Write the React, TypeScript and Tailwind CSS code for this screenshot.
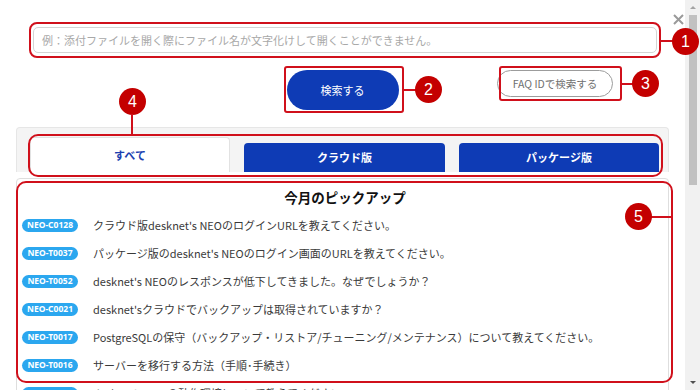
import React from 'react';

const faqs = [
  { id: 'NEO-C0128', title: "クラウド版desknet's NEOのログインURLを教えてください。" },
  { id: 'NEO-T0037', title: "パッケージ版のdesknet's NEOのログイン画面のURLを教えてください。" },
  { id: 'NEO-T0052', title: "desknet's NEOのレスポンスが低下してきました。なぜでしょうか？" },
  { id: 'NEO-C0021', title: "desknet'sクラウドでバックアップは取得されていますか？" },
  { id: 'NEO-T0017', title: 'PostgreSQLの保守（バックアップ・リストア/チューニング/メンテナンス）について教えてください。' },
  { id: 'NEO-T0016', title: 'サーバーを移行する方法（手順･手続き）' },
  { id: 'NEO-T0001', title: "desknet's NEOの動作環境について教えてください。" },
];

const Marker = ({ n, className }: { n: number; className: string }) => (
  <div
    className={`absolute w-[27px] h-[27px] rounded-full bg-[#c40000] text-white flex items-center justify-center text-[16px] font-['Liberation_Sans',sans-serif] ${className}`}
  >
    {n}
  </div>
);

function Annotations() {
  return (
    <div className="absolute inset-0 pointer-events-none">
      {/* 1: search box */}
      <div className="absolute left-[29px] top-[22px] w-[632px] h-[36px] rounded-[8px] border-2 border-[#d0101b]" />
      <div className="absolute left-[660px] top-[40px] w-[14px] h-[2px] bg-[#d0101b]" />
      <Marker n={1} className="left-[672px] top-[28px]" />

      {/* 2: search button */}
      <div className="absolute left-[284px] top-[66px] w-[120px] h-[47px] rounded-[3px] border-2 border-[#d0101b]" />
      <div className="absolute left-[403px] top-[89px] w-[14px] h-[2px] bg-[#d0101b]" />
      <Marker n={2} className="left-[415px] top-[76px]" />

      {/* 3: faq id button */}
      <div className="absolute left-[499px] top-[66px] w-[123px] h-[35px] rounded-[3px] border-2 border-[#d0101b]" />
      <div className="absolute left-[621px] top-[83px] w-[13px] h-[2px] bg-[#d0101b]" />
      <Marker n={3} className="left-[632px] top-[70px]" />

      {/* 4: tabs */}
      <Marker n={4} className="left-[119px] top-[88px]" />
      <div className="absolute left-[131px] top-[114px] w-[2px] h-[21px] bg-[#d0101b]" />
      <div className="absolute left-[28px] top-[134px] w-[635px] h-[43px] rounded-[10px] border-2 border-[#d0101b]" />

      {/* 5: pickup list */}
      <div className="absolute left-[16px] top-[181px] w-[657px] h-[202px] rounded-[10px] border-2 border-[#d0101b]" />
      <div className="absolute left-[650px] top-[216px] w-[22px] h-[2px] bg-[#d0101b]" />
      <Marker n={5} className="left-[625px] top-[203px]" />
    </div>
  );
}

function Scrollbar() {
  return (
    <div className="w-[15px] h-full bg-[#f1f1f1] flex flex-col items-center">
      <div className="h-[15px] flex items-center justify-center">
        <div className="w-0 h-0 border-l-[3px] border-r-[3px] border-b-[3px] border-l-transparent border-r-transparent border-b-[#a3a3a3]" />
      </div>
      <div className="w-[8px] h-[170px] bg-[#c1c1c1]" />
      <div className="flex-1" />
      <div className="h-[15px] flex items-center justify-center">
        <div className="w-0 h-0 border-l-[3px] border-r-[3px] border-t-[3px] border-l-transparent border-r-transparent border-t-[#505050]" />
      </div>
    </div>
  );
}

export default function App() {
  return (
    <div className="relative w-[700px] h-[390px] overflow-hidden bg-white flex font-['Noto_Sans_CJK_JP','Meiryo',sans-serif] text-[#333]">
      <div className="relative w-[685px] h-full overflow-hidden">
        {/* close */}
        <svg className="absolute left-[673px] top-[14px]" width="11" height="11" viewBox="0 0 11 11">
          <path d="M1 1L10 10M10 1L1 10" stroke="#9a9a9a" strokeWidth="2" />
        </svg>

        <div className="pt-[27px] pl-[33px] pr-[28px]">
          <div className="h-[26px] rounded-[5px] border border-[#d4d4d4] bg-white flex items-center pl-[8px] text-[11px] text-[#a8a8a8]">
            例：添付ファイルを開く際にファイル名が文字化けして開くことができません。
          </div>
        </div>

        <div className="mt-[17px] mx-[16px] grid grid-cols-[1fr_112px_1fr] items-start">
          <div />
          <button className="h-[40px] rounded-full bg-[#0e3bb5] text-white text-[11px]">検索する</button>
          <div className="flex justify-end pr-[56px]">
            <button className="w-[116px] h-[27px] rounded-full border border-[#9c9c9c] bg-white text-[10.5px] text-[#707070]">
              FAQ IDで検索する
            </button>
          </div>
        </div>

        <div className="mt-[17px] mx-[16px] h-[45px] bg-[#f4f4f4] border border-b-0 border-[#e6e6e6] rounded-t-[4px] flex items-end gap-[14px] pl-[13px]">
          <div className="shrink-0 w-[200px] h-[35px] bg-white border border-b-0 border-[#e2e2e2] rounded-t-[4px] flex items-center justify-center text-[11px] font-bold text-[#1b3fb0]">
            すべて
          </div>
          <div className="shrink-0 w-[201px] h-[29px] bg-[#0e3bb5] rounded-t-[4px] flex items-center justify-center text-[11px] font-bold text-white">
            クラウド版
          </div>
          <div className="shrink-0 w-[200px] h-[29px] bg-[#0e3bb5] rounded-t-[4px] flex items-center justify-center text-[11px] font-bold text-white">
            パッケージ版
          </div>
        </div>

        <div className="mt-[6px] mx-[16px] border border-[#dedede] rounded-[4px] bg-white pl-[5px]">
          <div className="pt-[8px] h-[32px] text-center text-[13.5px] font-bold text-[#111] leading-[20px]">
            今月のピックアップ
          </div>
          {faqs.map((f) => (
            <div key={f.id} className="h-[28px] flex items-center gap-[15px]">
              <span className="w-[56px] h-[13px] rounded-full bg-[#2ba7ef] text-white text-[8.5px] font-bold flex items-center justify-center font-['Noto_Sans',sans-serif] leading-none">
                {f.id}
              </span>
              <span className="text-[11px] text-[#3a3a3a] whitespace-nowrap">{f.title}</span>
            </div>
          ))}
        </div>
      </div>
      <Scrollbar />
      <Annotations />
    </div>
  );
}
